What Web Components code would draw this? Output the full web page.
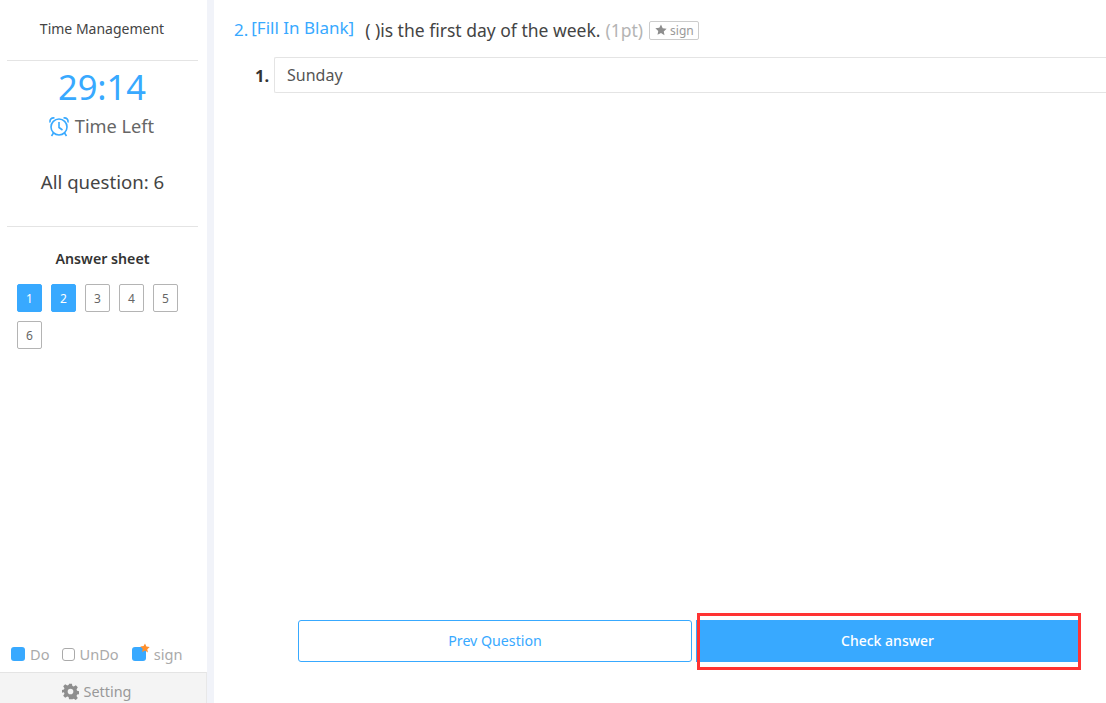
<!DOCTYPE html>
<html lang="en">
<head>
<meta charset="utf-8">
<title>Exam</title>
<style>
html, body { margin: 0; height: 100%; background: #fff; overflow: hidden; }
body { font-family: "Noto Sans", "Liberation Sans", sans-serif; }
</style>
</head>
<body>
<exam-page>
	<exam-sidebar slot="side"></exam-sidebar>
	<exam-question slot="main"></exam-question>
</exam-page>
<script>
const tpl = ( html ) =>
{
	const t = document.createElement( 'template' );
	t.innerHTML = html;
	return t;
};

class Base extends HTMLElement
{
	connectedCallback()
	{
		if ( this.shadowRoot ) return;
		this.attachShadow( { mode: 'open' } ).appendChild( this.constructor.template.content.cloneNode( true ) );
	}
}

class ExamPage extends Base {}
ExamPage.template = tpl( `
<style>
:host { display: grid; grid-template-columns: 207px 7px 1fr; height: 703px; }
.gap { background: #f1f3f9; }
</style>
<slot name="side"></slot><div class="gap"></div><slot name="main"></slot>` );

class AnswerChip extends Base {}
AnswerChip.template = tpl( `
<style>
:host { display: flex; width: 25px; height: 28px; box-sizing: border-box; align-items: center; justify-content: center;
	border: 1px solid #b4b4b4; border-radius: 2px; color: #666; font-size: 12px; }
:host([done]) { background: #38a9ff; border-color: #38a9ff; color: #fff; }
</style><slot></slot>` );

class ExamSidebar extends Base {}
ExamSidebar.template = tpl( `
<style>
:host { display: flex; flex-direction: column; height: 703px; color: #444; }
.title { height: 61px; margin: 0 9px 0 7px; padding-right: 1px; box-sizing: border-box; padding-top: 19px; border-bottom: 1px solid #e4e4e4;
	text-align: center; font-size: 14px; line-height: 20px; }
.clock { margin: 6px 0 0; padding-right: 3px; text-align: center; color: #38a9ff; font-size: 34.5px; line-height: 40px; }
.left { display: flex; justify-content: center; align-items: center; gap: 5px; margin-top: 5px; padding-right: 5px; height: 28px; color: #666; font-size: 18.2px; }
.all { margin: 28px 0 0; padding-right: 2px; text-align: center; font-size: 18.6px; line-height: 28px; }
.rule { margin: 30px 9px 0 7px; border-top: 1px solid #e4e4e4; }
.sheet { margin-top: 22px; padding-right: 2px; text-align: center; font-size: 14.2px; line-height: 20px; font-weight: 600; color: #333; }
.grid { display: flex; flex-wrap: wrap; gap: 9px; margin: 15px 0 0 17px; width: 175px; }
.legend { margin-top: auto; display: flex; align-items: center; height: 36px; padding-left: 11px; color: #aaa; font-size: 14.6px; }
.legend span { display: flex; align-items: center; gap: 4px; margin-right: 13px; }
.legend span:first-child { gap: 5px; }
.legend span:last-child { gap: 8px; }
.box { position: relative; width: 14px; height: 14px; box-sizing: border-box; border-radius: 3px; background: #38a9ff; }
.box.empty { width: 13px; height: 13px; background: #fff; border: 1.5px solid #aaa; }
.box svg { position: absolute; top: -4px; right: -4px; }
.setting { display: flex; align-items: center; justify-content: center; gap: 5px; height: 31px; box-sizing: border-box;
	padding: 6px 13px 0 0; background: #f4f4f4; border-top: 1px solid #e4e4e4; border-right: 1px solid #e8e8e8; color: #999; font-size: 14.4px; }
</style>
<div class="title">Time Management</div>
<div class="clock">29:14</div>
<div class="left">
	<svg width="22" height="22" viewBox="0 0 22 22" fill="none" stroke="#38a9ff" stroke-width="1.6">
		<circle cx="11" cy="12" r="8"/>
		<path d="M11 7V12.500L14.500 15M2 7.500C1.500 4.500 3.500 2.500 6.500 3M20 7.500C20.500 4.500 18.500 2.500 15.500 3M5.500 18 3.500 21M16.500 18 18.500 21"/>
	</svg>
	<span>Time Left</span>
</div>
<div class="all">All question: 6</div>
<div class="rule"></div>
<div class="sheet">Answer sheet</div>
<div class="grid">
	<answer-chip done>1</answer-chip>
	<answer-chip done>2</answer-chip>
	<answer-chip>3</answer-chip>
	<answer-chip>4</answer-chip>
	<answer-chip>5</answer-chip>
	<answer-chip>6</answer-chip>
</div>
<div class="legend">
	<span><i class="box"></i>Do</span>
	<span><i class="box empty"></i>UnDo</span>
	<span><i class="box"><svg width="10" height="10" viewBox="0 0 24 24"><path fill="#ff8f2b" d="M12 1l3.400 7.300 7.900 1-5.800 5.500 1.500 7.900L12 17.800 5 21.700l1.500-7.900L.7 8.300l7.900-1z"/></svg></i>sign</span>
</div>
<div class="setting">
	<svg width="17" height="17" viewBox="0 0 24 24"><path fill="#8e8e8e" fill-rule="evenodd" d="M10 1h4l.7 3.300 1.900.8 2.900-1.800 2.800 2.800-1.800 2.900.8 1.900 3.300.7v4l-3.300.7-.8 1.900 1.800 2.900-2.800 2.800-2.900-1.800-1.900.8L14 23h-4l-.7-3.300-1.900-.8-2.900 1.800-2.800-2.800 1.800-2.900-.8-1.900L-.6 14v-4l3.300-.7.8-1.900-1.800-2.900 2.800-2.800 2.900 1.800 1.900-.8zM12 8a4 4 0 1 0 0 8 4 4 0 0 0 0-8z"/></svg>
	<span>Setting</span>
</div>` );

class ExamQuestion extends Base {}
ExamQuestion.template = tpl( `
<style>
:host { display: flex; flex-direction: column; height: 703px; color: #444; overflow: hidden; }
.head { display: flex; align-items: center; height: 24px; margin: 18px 0 0 20px; font-size: 17.5px; white-space: nowrap; }
.num, .kind { color: #38a9ff; font-size: 17px; position: relative; }
.num { margin-right: 3px; top: -1px; }
.kind { margin-right: 11px; top: -3px; }
.pt { color: #b4b4b4; margin-left: 5px; }
.mark { display: inline-flex; align-items: center; gap: 3px; height: 19px; box-sizing: border-box; margin-left: 6px; padding: 0 4px 0 5px;
	border: 1px solid #ccc; border-radius: 2px; color: #999; font-size: 12px; }
.answer { display: flex; align-items: center; margin: 15px 0 0 41px; }
.answer b { width: 19px; font-size: 16.5px; color: #333; }
.field { flex: 1; height: 36px; box-sizing: border-box; padding-left: 12px; line-height: 34px; border: 1px solid #e4e4e4; border-right: 0;
	border-radius: 2px 0 0 2px; font-size: 16px; color: #555; }
.foot { margin: auto 0 41px 84px; display: flex; gap: 4px; }
button { height: 42px; box-sizing: border-box; font: inherit; font-size: 14.2px; padding: 0 0 2px; border: 1px solid #38a9ff; }
.prev { width: 394px; background: #fff; color: #38a9ff; border-radius: 3px; }
.check { position: relative; width: 383px; background: #38a9ff; color: #fff; font-weight: 500; font-size: 14px; }
.check::after { content: ""; position: absolute; left: 0; right: -3px; top: -8px; bottom: -9px; border: 3px solid #f33; }
</style>
<div class="head">
	<span class="num">2.</span><span class="kind">[Fill In Blank]</span>
	<span>( )is the first day of the week.</span><span class="pt">(1pt)</span>
	<span class="mark"><svg width="12" height="12" viewBox="0 0 24 24"><path fill="#8e8e8e" d="M12 1l3.400 7.300 7.900 1-5.800 5.500 1.500 7.900L12 17.800 5 21.700l1.500-7.900L.7 8.300l7.900-1z"/></svg>sign</span>
</div>
<div class="answer"><b>1.</b><div class="field">Sunday</div></div>
<div class="foot">
	<button class="prev">Prev Question</button>
	<button class="check">Check answer</button>
</div>` );

customElements.define( 'exam-page', ExamPage );
customElements.define( 'answer-chip', AnswerChip );
customElements.define( 'exam-sidebar', ExamSidebar );
customElements.define( 'exam-question', ExamQuestion );
</script>
</body>
</html>
